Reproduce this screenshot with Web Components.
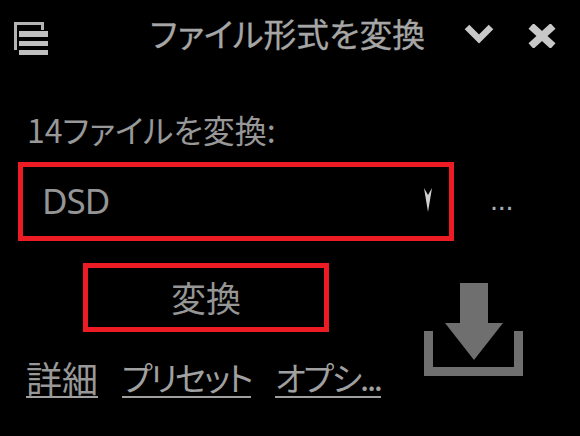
<!DOCTYPE html>
<html lang="ja">
<head>
<meta charset="utf-8">
<title>ファイル形式を変換</title>
<style>
  html, body { margin: 0; background: #000; }
  body { width: 580px; height: 436px; overflow: hidden; font-family: "Noto Sans CJK JP", "Liberation Sans", sans-serif; color: #a0a0a0; }
</style>
</head>
<body>
<convert-panel>
  <panel-titlebar>ファイル形式を変換</panel-titlebar>
  <span slot="label">14ファイルを変換:</span>
  <format-select slot="select">DSD</format-select>
  <red-button slot="action">変換</red-button>
  <link-row slot="links">
    <a class="kanji">詳細</a>
    <a>プリセット</a>
    <a>オプシ...</a>
  </link-row>
  <download-icon slot="icon"></download-icon>
</convert-panel>

<script>
'use strict';

const shared = `
  :host { font-feature-settings: "palt"; }
`;

class ConvertPanel extends HTMLElement {
  constructor() {
    super();
    this.attachShadow({ mode: 'open' }).innerHTML = `
      <style>
        ${shared}
        :host { display: flex; flex-direction: column; width: 580px; height: 436px; }
        .label { height: 46px; margin-top: 46px; padding-left: 27px; font-size: 32px; line-height: 46px; color: #989898; white-space: nowrap; }
        .select { margin: 10px 0 0 18px; }
        .bottom { display: grid; grid-template-columns: 406px 120px; margin: 22px 0 0 18px; }
        .left { display: flex; flex-direction: column; }
        .action { margin-left: 65px; }
        .icon { padding-top: 20px; }
      </style>
      <slot></slot>
      <div class="label"><slot name="label"></slot></div>
      <div class="select"><slot name="select"></slot></div>
      <div class="bottom">
        <div class="left">
          <div class="action"><slot name="action"></slot></div>
          <slot name="links"></slot>
        </div>
        <div class="icon"><slot name="icon"></slot></div>
      </div>
    `;
  }
}

class PanelTitlebar extends HTMLElement {
  constructor() {
    super();
    this.attachShadow({ mode: 'open' }).innerHTML = `
      <style>
        ${shared}
        :host { display: flex; align-items: flex-start; height: 60px; padding-top: 10px; box-sizing: border-box; }
        svg { display: block; flex: none; filter: blur(.6px); }
        .menu { margin: 12px 0 0 13px; }
        .title { width: 280px; margin-left: 101px; font-size: 32.8px; line-height: 46px; color: #a6a6a6; -webkit-text-stroke: .3px #a6a6a6; white-space: nowrap; }
        .chev { margin: 14px 0 0 34px; }
        .close { margin: 14px 0 0 33px; }
      </style>
      <svg class="menu" width="36" height="34" viewBox="0 0 36 34">
        <path d="M2.5 28V1.5H29.5V8" fill="none" stroke="#b4b4b4" stroke-width="3"/>
        <path d="M6 9h29v6H6zM6 19h29v5H6zM6 28h29v5H6z" fill="#c0c0c0"/>
      </svg>
      <div class="title"><slot></slot></div>
      <svg class="chev" width="30" height="20" viewBox="0 0 30 20">
        <path d="M3 3l12 12L27 3" fill="none" stroke="#c8c8c8" stroke-width="6.5"/>
      </svg>
      <svg class="close" width="30" height="24" viewBox="0 0 30 24">
        <path d="M4 2l22 20M26 2L4 22" fill="none" stroke="#c8c8c8" stroke-width="7.5"/>
      </svg>
    `;
  }
}

class FormatSelect extends HTMLElement {
  constructor() {
    super();
    this.attachShadow({ mode: 'open' }).innerHTML = `
      <style>
        ${shared}
        :host { display: flex; align-items: center; }
        .box { display: flex; align-items: center; width: 436px; height: 79px; box-sizing: border-box; border: 5px solid #ed1c24; padding: 0 16px 0 19px; font-family: "Noto Sans", sans-serif; font-size: 35px; letter-spacing: -1px; line-height: 1; color: #959595; }
        .value { flex: 1; padding-bottom: 2px; }
        .arrow { display: block; margin: 0 1px 3px 0; }
        .more { margin: 0 0 0 36px; font-family: "Liberation Sans", sans-serif; font-size: 29px; line-height: 29px; letter-spacing: -.3px; color: #a0b0b8; padding-bottom: 2px; }
      </style>
      <div class="box">
        <span class="value"><slot></slot></span>
        <svg class="arrow" width="8" height="24" viewBox="0 0 8 24"><path d="M0 0L4 7 8 0 4 24z" fill="#d0d0d0"/></svg>
      </div>
      <span class="more">...</span>
    `;
  }
}

class RedButton extends HTMLElement {
  constructor() {
    super();
    this.attachShadow({ mode: 'open' }).innerHTML = `
      <style>
        ${shared}
        :host { display: flex; align-items: center; justify-content: center; width: 246px; height: 69px; box-sizing: border-box; border: 5px solid #ed1c24; font-size: 35px; line-height: 1; color: #969696; padding-bottom: 3px; }
      </style>
      <slot></slot>
    `;
  }
}

class LinkRow extends HTMLElement {
  constructor() {
    super();
    this.attachShadow({ mode: 'open' }).innerHTML = `
      <style>
        ${shared}
        :host { display: flex; gap: 24px; margin: 25px 0 0 8px; font-size: 33px; letter-spacing: -2.2px; line-height: 40px; color: #a0a0a0; white-space: nowrap; }
        ::slotted(a) { display: block; height: 41px; box-sizing: border-box; border-bottom: 2px solid #a0a0a0; }
        ::slotted(a.kanji) { font-size: 36px; letter-spacing: 0; color: #989898; }
      </style>
      <slot></slot>
    `;
  }
}

class DownloadIcon extends HTMLElement {
  constructor() {
    super();
    this.attachShadow({ mode: 'open' }).innerHTML = `
      <style>
        :host { display: block; }
        svg { display: block; }
      </style>
      <svg width="99" height="93" viewBox="0 0 99 93">
        <path d="M36 0H64V40H79L50 77 21 40H36z" fill="#6f6f6f"/>
        <path d="M0 48H9V84H90V48H99V93H0z" fill="#6f6f6f"/>
      </svg>
    `;
  }
}

customElements.define('convert-panel', ConvertPanel);
customElements.define('panel-titlebar', PanelTitlebar);
customElements.define('format-select', FormatSelect);
customElements.define('red-button', RedButton);
customElements.define('link-row', LinkRow);
customElements.define('download-icon', DownloadIcon);
</script>
</body>
</html>
